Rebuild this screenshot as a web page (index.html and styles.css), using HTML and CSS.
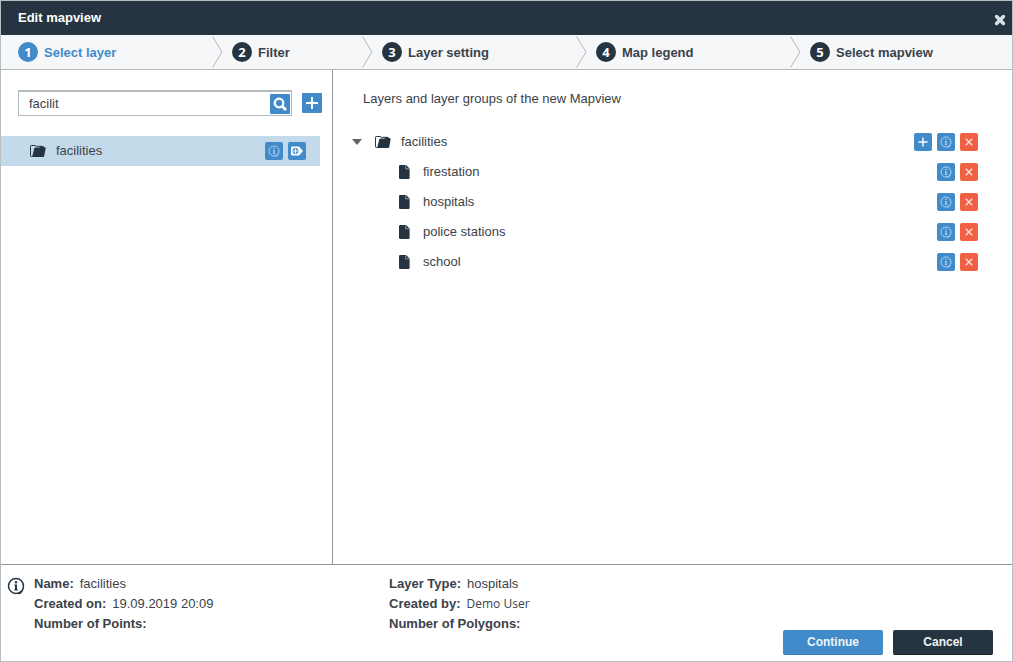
FILE: index.html
```html
<!DOCTYPE html>
<html lang="en">
<head>
<meta charset="utf-8">
<title>Edit mapview</title>
<link rel="stylesheet" href="styles.css">
</head>
<body>
<svg class="defs" aria-hidden="true">
  <symbol id="i-info" viewBox="0 0 18 18">
    <circle cx="9" cy="9" r="7.500" fill="none" stroke="currentColor" stroke-width="1.500"/>
    <path d="M16.800 9.500c-.6 3.600-2.800 5.900-6.300 6.800l1.500 1.200q4.300-1.200 4.800-8z" fill="currentColor"/>
    <circle cx="9" cy="5.200" r="1.200" fill="currentColor"/>
    <path d="M7.300 7.500H10v4.800h.7v1.100H7.300v-1.100H8V8.600h-.7z" fill="currentColor"/>
  </symbol>
  <symbol id="i-plus" viewBox="0 0 12 12"><path d="M6 0v12M0 6h12" stroke="currentColor" stroke-width="2"/></symbol>
  <symbol id="i-thin-plus" viewBox="0 0 10 10"><path d="M5 .5v9M.5 5h9" stroke="currentColor" stroke-width="1.400"/></symbol>
  <symbol id="i-remove" viewBox="0 0 10 10"><path d="M1.800 1.800l6.400 6.400M8.200 1.800L1.800 8.200" stroke="currentColor" stroke-width="1.300"/></symbol>
  <symbol id="i-folder" viewBox="0 0 16 12">
    <path d="M3 11.500H1.300q-.8 0-.8-.8V1.300q0-.8.800-.8h3.900l1 .8H12q.8 0 .8.700" fill="none" stroke="currentColor" stroke-width="1"/>
    <path d="M4.300 3.200Q4.500 2.400 5.300 2.400h4.200l1-1.200h2.900l.8 1h.8q.8 0 .7.800l-1.500 8.100q-.2.900-1 .9H2.800q-.7 0-.5-.8z" fill="currentColor"/>
  </symbol>
  <symbol id="i-file" viewBox="0 0 11 14">
    <path d="M1.200 0H7l3.600 3.600v9.200q0 1.200-1.200 1.200H1.200Q0 14 0 12.800V1.200Q0 0 1.200 0z" fill="currentColor"/>
    <path d="M6.700.5v3.400h3.600" fill="none" stroke="#fff" stroke-width=".7" opacity=".7"/>
  </symbol>
</svg>
<main class="dialog">
  <header class="titlebar">
    <h1 class="title">Edit mapview</h1>
    <button class="close" type="button" aria-label="Close">
      <svg class="close-icon" viewBox="0 0 12 12"><path d="M2.600 2.600l6.800 6.800M9.400 2.600L2.600 9.400" stroke="currentColor" stroke-width="3.600" stroke-linecap="round"/></svg>
    </button>
  </header>
  <ol class="steps">
    <li class="step active"><span class="num">1</span><span class="step-name">Select layer</span><svg class="chevron" viewBox="0 0 11 32"><path d="M.5.500l9.500 15.500L.5 31.500"/></svg></li>
    <li class="step short"><span class="num">2</span><span class="step-name">Filter</span><svg class="chevron" viewBox="0 0 11 32"><path d="M.5.500l9.500 15.500L.5 31.500"/></svg></li>
    <li class="step"><span class="num">3</span><span class="step-name">Layer setting</span><svg class="chevron" viewBox="0 0 11 32"><path d="M.5.500l9.500 15.500L.5 31.500"/></svg></li>
    <li class="step"><span class="num">4</span><span class="step-name">Map legend</span><svg class="chevron" viewBox="0 0 11 32"><path d="M.5.500l9.500 15.500L.5 31.500"/></svg></li>
    <li class="step"><span class="num">5</span><span class="step-name">Select mapview</span></li>
  </ol>
  <div class="content">
    <section class="sidebar">
      <form class="search-row">
        <div class="search">
          <input class="search-input" type="text" value="facilit" aria-label="Search layers">
          <button class="square medium" type="button" aria-label="Search"><svg class="icon-search" viewBox="0 0 14 14"><circle cx="6" cy="6" r="4.300" fill="none" stroke="currentColor" stroke-width="2.200"/><path d="M9 9l4 4" stroke="currentColor" stroke-width="2.800"/></svg></button>
        </div>
        <button class="square medium" type="button" aria-label="Add"><svg class="icon-plus"><use href="#i-plus"/></svg></button>
      </form>
      <div class="result">
        <svg class="icon-folder"><use href="#i-folder"/></svg>
        <span class="label">facilities</span>
        <button class="square" type="button" aria-label="Layer information"><svg class="icon-info"><use href="#i-info"/></svg></button>
        <button class="square" type="button" aria-label="Add to mapview"><svg class="icon-tag" viewBox="0 0 12 10"><path d="M1 .5h7L12 5 8 9.500H1q-1 0-1-1v-7q0-1 1-1z" fill="currentColor"/><circle cx="4.500" cy="5" r="2.900" fill="#428bca"/><path d="M4.500 2.800v4.400M2.300 5h4.400" stroke="currentColor" stroke-width="1.200"/></svg></button>
      </div>
    </section>
    <section class="layers">
      <h2 class="heading">Layers and layer groups of the new Mapview</h2>
      <ul class="tree">
        <li class="row">
          <button class="toggle" type="button" aria-label="Collapse facilities"><svg class="icon-caret" viewBox="0 0 10 6"><path d="M0 0h10L5 6z" fill="currentColor"/></svg></button>
          <svg class="icon-folder"><use href="#i-folder"/></svg>
          <span class="label">facilities</span>
          <button class="square" type="button" aria-label="Add to facilities"><svg class="icon-small"><use href="#i-thin-plus"/></svg></button>
          <button class="square" type="button" aria-label="Information on facilities"><svg class="icon-info"><use href="#i-info"/></svg></button>
          <button class="square danger" type="button" aria-label="Remove facilities"><svg class="icon-small"><use href="#i-remove"/></svg></button>
        </li>
        <li class="row child">
          <svg class="icon-file"><use href="#i-file"/></svg><span class="label">firestation</span>
          <button class="square" type="button" aria-label="Information on firestation"><svg class="icon-info"><use href="#i-info"/></svg></button>
          <button class="square danger" type="button" aria-label="Remove firestation"><svg class="icon-small"><use href="#i-remove"/></svg></button>
        </li>
        <li class="row child">
          <svg class="icon-file"><use href="#i-file"/></svg><span class="label">hospitals</span>
          <button class="square" type="button" aria-label="Information on hospitals"><svg class="icon-info"><use href="#i-info"/></svg></button>
          <button class="square danger" type="button" aria-label="Remove hospitals"><svg class="icon-small"><use href="#i-remove"/></svg></button>
        </li>
        <li class="row child">
          <svg class="icon-file"><use href="#i-file"/></svg><span class="label">police stations</span>
          <button class="square" type="button" aria-label="Information on police stations"><svg class="icon-info"><use href="#i-info"/></svg></button>
          <button class="square danger" type="button" aria-label="Remove police stations"><svg class="icon-small"><use href="#i-remove"/></svg></button>
        </li>
        <li class="row child">
          <svg class="icon-file"><use href="#i-file"/></svg><span class="label">school</span>
          <button class="square" type="button" aria-label="Information on school"><svg class="icon-info"><use href="#i-info"/></svg></button>
          <button class="square danger" type="button" aria-label="Remove school"><svg class="icon-small"><use href="#i-remove"/></svg></button>
        </li>
      </ul>
    </section>
  </div>
  <footer class="footer">
    <svg class="footer-icon"><use href="#i-info"/></svg>
    <dl class="facts first">
      <div class="fact"><dt>Name:</dt><dd>facilities</dd></div>
      <div class="fact"><dt>Created on:</dt><dd>19.09.2019 20:09</dd></div>
      <div class="fact"><dt>Number of Points:</dt><dd></dd></div>
    </dl>
    <dl class="facts">
      <div class="fact"><dt>Layer Type:</dt><dd>hospitals</dd></div>
      <div class="fact"><dt>Created by:</dt><dd class="user">Demo User</dd></div>
      <div class="fact"><dt>Number of Polygons:</dt><dd></dd></div>
    </dl>
    <div class="actions">
      <button class="btn primary" type="button">Continue</button>
      <button class="btn" type="button">Cancel</button>
    </div>
  </footer>
</main>
</body>
</html>
```
FILE: styles.css
```css
* { box-sizing: border-box; }
body {
  margin: 0;
  font: 13px/20px "Liberation Sans", Arial, sans-serif;
  color: #3b4249;
}
button { padding: 0; border: 0; font: inherit; cursor: pointer; }
svg { display: block; flex: none; }
ol, ul, dl, dd, h1, h2 { margin: 0; padding: 0; list-style: none; }
.defs { position: absolute; width: 0; height: 0; }

.dialog {
  display: flex;
  flex-direction: column;
  min-height: 100vh;
  border: 1px solid #b9bec1;
  background: #fff;
}
.titlebar {
  display: flex;
  justify-content: space-between;
  height: 34px;
  padding: 7px 6px 0 17px;
  background: #263441;
}
.title { font-size: 13px; line-height: 20px; color: #fff; }
.close {
  display: grid;
  place-items: center;
  width: 12px;
  height: 24px;
  background: none;
  color: #d6e0e9;
}
.close-icon { width: 12px; height: 12px; }

.steps {
  display: flex;
  height: 35px;
  border-bottom: 1px solid #b4b8bb;
  background: #f5f7f9;
  font-weight: bold;
}
.step {
  display: flex;
  align-items: center;
  gap: 6px;
  flex: 0 0 214px;
  padding-left: 17px;
}
.step.short { flex-basis: 150px; }
.step.active { color: #428bca; }
.step-name { line-height: 22px; padding-top: 1px; }
.num {
  width: 20px;
  height: 20px;
  border-radius: 50%;
  background: #263441;
  color: #fff;
  font: bold 13px/20px "Open Sans", sans-serif;
  text-align: center;
}
.active .num { background: #428bca; }
.chevron { width: 11px; height: 32px; margin-left: auto; margin-right: -8px; }
.chevron path { fill: none; stroke: #b4b8bb; }

.content { display: flex; flex: 1; border-bottom: 1px solid #929699; }
.sidebar { flex: 0 0 332px; padding-top: 20px; border-right: 1px solid #929699; }
.search-row {
  display: flex;
  align-items: center;
  gap: 10px;
  padding: 0 10px 0 17px;
}
.search {
  display: flex;
  align-items: center;
  flex: 1;
  height: 26px;
  padding-right: 1px;
  border: 1px solid #b4bbbd;
  border-top-width: 2px;
}
.search-input {
  flex: 1;
  min-width: 0;
  padding: 0 10px;
  border: 0;
  outline: 0;
  background: none;
  color: inherit;
  font: inherit;
}
.square {
  display: grid;
  place-items: center;
  flex: none;
  width: 18px;
  height: 18px;
  border-radius: 2px;
  background: #428bca;
  color: #fff;
}
.square.medium { width: 20px; height: 20px; border-radius: 1px; }
.square.danger { background: #f06042; color: #ffe3dc; }
.icon-search { width: 14px; height: 14px; }
.icon-plus { width: 12px; height: 12px; }
.icon-small { width: 10px; height: 10px; }
.icon-info { width: 12px; height: 12px; color: #a9d3f5; }
.icon-tag { width: 12px; height: 10px; }
.icon-folder { width: 16px; height: 12px; color: #263441; }
.icon-file { width: 11px; height: 14px; color: #263441; }
.icon-caret { width: 10px; height: 6px; }
.result {
  display: flex;
  align-items: center;
  gap: 5px;
  height: 30px;
  margin: 20px 12px 0 0;
  padding: 0 14px 0 29px;
  background: #c3daeb;
}
.label { flex: 1; padding-left: 5px; }

.layers { flex: 1; padding: 19px 34px 0 19px; }
.heading { padding-left: 11px; font-size: 13px; line-height: 20px; font-weight: normal; }
.tree { padding-top: 18px; }
.row { display: flex; align-items: center; gap: 5px; height: 30px; }
.child { padding-left: 47px; }
.child .label { padding-left: 8px; }
.toggle {
  display: grid;
  place-items: center;
  width: 10px;
  height: 18px;
  margin-right: 8px;
  background: none;
  color: #5f6468;
}

.footer { display: flex; height: 96px; padding: 9px 19px 6px 6px; }
.footer-icon { width: 18px; height: 18px; margin-top: 3px; color: #263441; }
.facts { padding-left: 9px; }
.facts.first { flex: 0 0 355px; }
.fact { display: flex; gap: 6px; }
dt { font-weight: bold; }
.user { font: 12px/20px "Open Sans", sans-serif; }
.actions { display: flex; gap: 10px; align-self: flex-end; margin-left: auto; }
.btn {
  width: 100px;
  height: 25px;
  border-bottom: 1px solid #1a232c;
  border-radius: 2px;
  background: #263441;
  color: #eef4f9;
  font-size: 12px;
  font-weight: bold;
}
.btn.primary { border-color: #3a7db8; background: #428bca; }
```
